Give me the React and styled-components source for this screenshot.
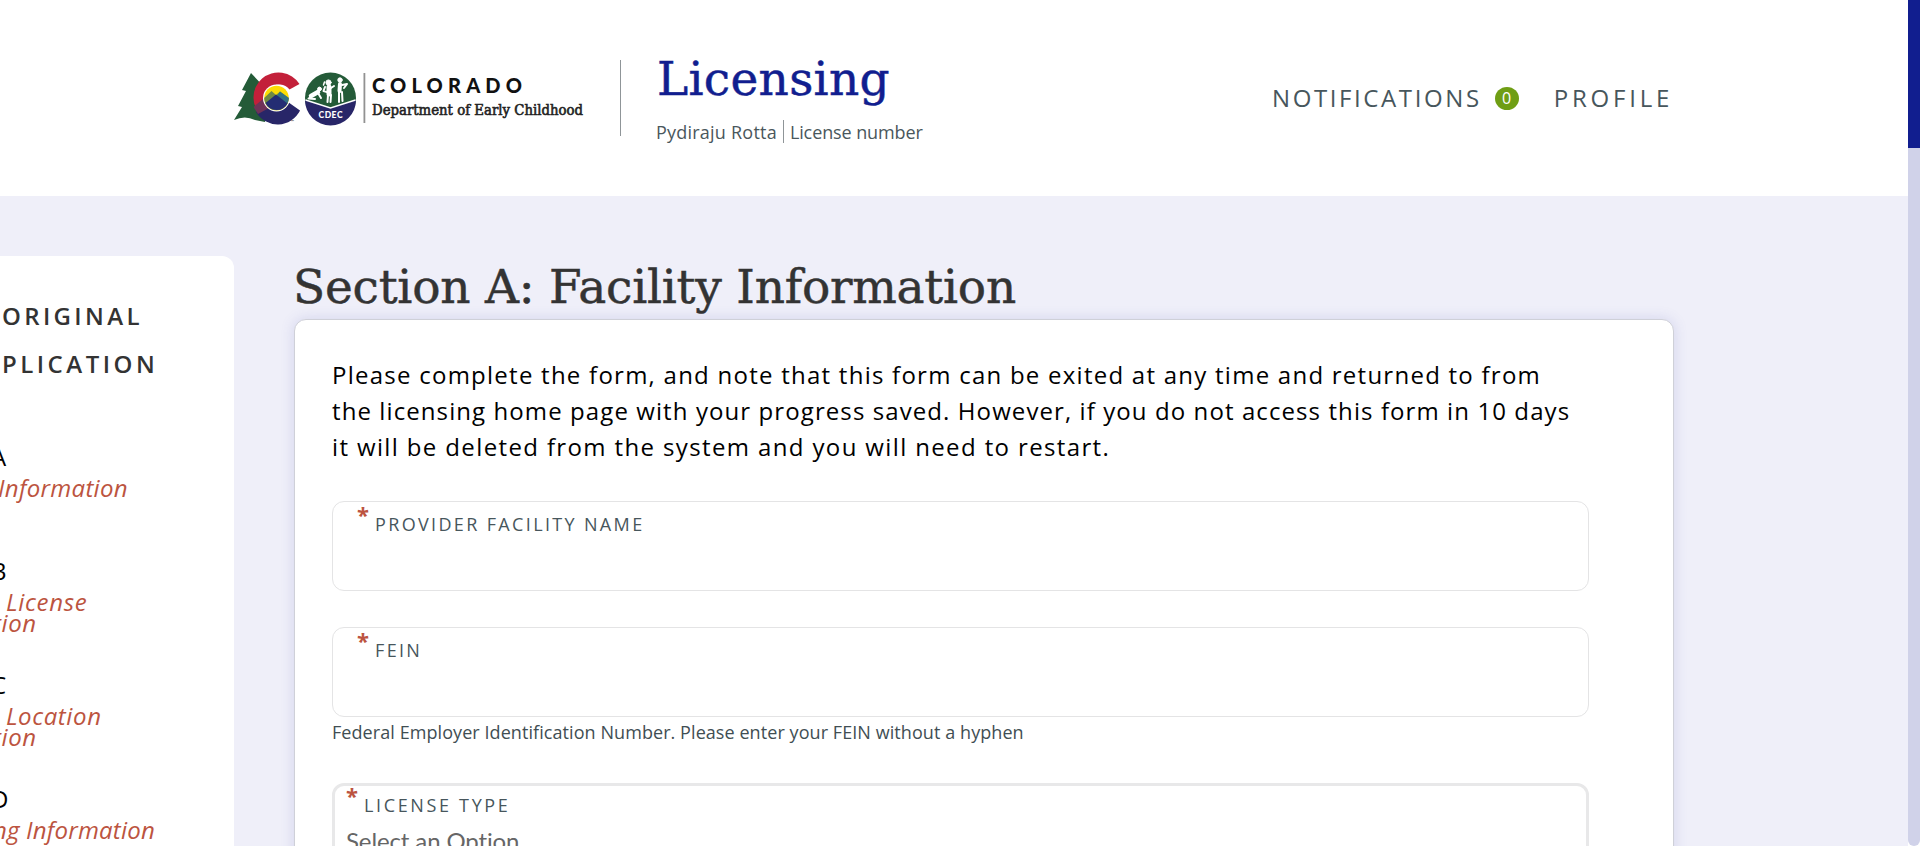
import React from 'react';
import styled, { createGlobalStyle } from 'styled-components';

const Global = createGlobalStyle`
  * { box-sizing: border-box; }
  body { margin: 0; background: #fff; font-family: "Open Sans", "Noto Sans", sans-serif; }
  h1, h2, p { margin: 0; font-weight: 400; }
`;

const Window = styled.div`display: flex; width: 100%; height: 846px; overflow: hidden;`;
const Page = styled.div`flex: 1; min-width: 0; background: #efeff9;`;
const ScrollTrack = styled.div`
  width: 12px; height: 846px; background: #d0d2e9; border-radius: 0 0 6px 6px;
`;
const ScrollThumb = styled.div`height: 148px; background: #111e8f;`;

const Header = styled.header`
  display: flex; align-items: flex-start; height: 196px; background: #fff; padding-left: 234px;
`;
const Logo = styled.svg`flex: none; margin-top: 66px; width: 350px; height: 64px;`;
const Divider = styled.div`width: 1px; height: 76px; margin: 60px 0 0 36px; background: #8f9598;`;
const Brand = styled.div`margin: 54px 0 0 36px; width: 420px; white-space: nowrap;`;
const BrandName = styled.h1`
  font: 47px/50px "DejaVu Serif", serif; color: #111e8f; letter-spacing: 0.3px;
  -webkit-text-stroke: 0.5px #111e8f;
`;
const BrandInfo = styled.div`
  display: flex; margin: 16px 0 0 -1px; font-size: 18px; line-height: 24px; color: #4a575c;
`;
const BrandItem = styled.span`
  letter-spacing: ${(p) => p.$track || 0}px;
  & + & { border-left: 1px solid #8f9598; margin-left: 6px; padding-left: 6px; height: 23px; }
`;
const Nav = styled.nav`display: flex; align-items: center; margin: 82px 0 0 195px; height: 31px;`;
const NavLink = styled.a`
  font-size: 24px; line-height: 30px; color: #47565c; letter-spacing: ${(p) => p.$track}px; white-space: nowrap;
`;
const Badge = styled.span`
  width: 24px; height: 23px; border-radius: 50%; margin: 1px 35px 0 13px; background: #6f9e14; color: #fff;
  font-size: 16px; line-height: 22px; text-align: center;
`;

const Content = styled.div`display: flex; align-items: flex-start; padding-top: 60px;`;
const Sidebar = styled.aside`
  width: 234px; height: 700px; padding-top: 36px; background: #fff; border-radius: 0 12px 0 0; overflow: hidden;
  white-space: nowrap;
`;
const SideHeading = styled.h2`
  padding-left: 2px; margin-bottom: 54px; font-size: 24px; font-weight: 600; line-height: 48px; color: #333;
`;
const SideHeadingLine = styled.div`letter-spacing: ${(p) => p.$track}px;`;
const Step = styled.div`height: 114px;`;
const StepLetter = styled.div`
  margin-left: ${(p) => p.$shift}px; margin-bottom: 5px; font-size: 24px; line-height: 30px; color: #000;
`;
const StepName = styled.div`
  margin-left: ${(p) => p.$shift}px; font-size: 24px; font-style: italic; line-height: 21px; color: #bc5440;
  letter-spacing: ${(p) => p.$track || 0}px;
`;

const Main = styled.main`width: 1380px; margin-left: 60px;`;
const Title = styled.h2`
  font: 47px/62px "DejaVu Serif", serif; color: #333; letter-spacing: -0.22px; margin: 0 0 1px -1px; white-space: nowrap;
  -webkit-text-stroke: 0.5px #333;
`;
const Card = styled.section`
  height: 700px; padding: 37px 36px 36px 37px; background: #fff; border: 1px solid #cfd0d8; border-radius: 12px;
  box-shadow: 0 0 14px rgba(70, 80, 170, 0.17);
`;
const Intro = styled.p`margin-bottom: 36px; font-size: 24px; line-height: 36px; color: #000; white-space: nowrap;`;
const IntroLine = styled.span`display: block; letter-spacing: ${(p) => p.$track}px;`;
const Field = styled.div`
  display: flex; align-items: flex-start; width: 1257px; height: 90px; margin-bottom: ${(p) => (p.$tight ? 4 : 36)}px;
  padding: 0 0 0 24px; border: 1px solid #e4e4e5; border-radius: 12px;
`;
const Star = styled.span`width: 18px; font-size: 22px; font-weight: 700; line-height: 24px; color: #bc5440;`;
const Label = styled.label`
  margin-top: 10px; font-size: 18px; line-height: 24px; letter-spacing: ${(p) => p.$track || 2.35}px; color: #47565c;
`;
const Help = styled.p`
  margin-bottom: 40px; font-size: 18px; line-height: 23px; height: 22px; letter-spacing: 0.07px; color: #414e53;
`;
const Select = styled.div`
  width: 1257px; height: 104px; padding-left: 11px; border: 3px solid #e8e8e9; border-radius: 12px;
`;
const SelectTop = styled.div`display: flex; align-items: flex-start; height: 40px; margin-top: -3px;`;
const SelectValue = styled.div`
  font: 24px/30px Lato, sans-serif; letter-spacing: -0.12px; color: #666; margin-top: 3px;
`;

const steps = [
  { letter: 'A', shift: -9, names: [['Information', -2, 0.3]] },
  { letter: 'B', shift: -9, names: [['License', 6, 0.7], ['tion', -7, 0.6]] },
  { letter: 'C', shift: -9, names: [['Location', 6, 0.6], ['tion', -7, 0.6]] },
  { letter: 'D', shift: -9, names: [['ng Information', -7, 0.2]] },
];

function CdecLogo() {
  return (
    <Logo viewBox="234 66 350 64">
      <path d="M251 73L242 90L246 91L238 106L242 107L234 120Q245 115 255 120L265 122V88Z" fill="#245b38" />
      <path d="M299.5 84A25 25 0 1 0 299.5 111L289.500 105.500A13 13 0 1 1 289.500 89.500Z" fill="#c3203a" />
      <path d="M256 112A25 25 0 0 0 300 110.500L288 102L283 106L270 106L264 104Z" fill="#282668" />
      <path d="M253.500 107L263 99L269 108L258 114Z" fill="#703258" />
      <circle cx="276.500" cy="98" r="13.500" fill="#fff" />
      <circle cx="276.500" cy="98" r="12.300" fill="#fddc05" />
      <path d="M264.200 98L271.500 91L276 95L280 91.500L288.800 98A12.300 12.300 0 0 1 264.200 98Z" fill="#708a43" />
      <path d="M280 91.500L288.800 98A12.300 12.300 0 0 1 286 105.500L276 98Z" fill="#337184" />
      <path d="M265.500 103L276 94.500L287.500 103.500A12.300 12.300 0 0 1 265.500 103Z" fill="#242d73" />
      <text x="291" y="123" fontSize="4" fontFamily="Lato" fill="#222">™</text>
      <circle cx="330.500" cy="98" r="25.500" fill="#245b38" />
      <path d="M305 100L330.500 108L356 100A25.500 25.500 0 0 1 305 100Z" fill="#282668" />
      <path d="M305.500 100L330.500 108L355.500 100" fill="none" stroke="#fff" strokeWidth="1.500" />
      <g fill="none" stroke="#fff" strokeLinecap="round" strokeLinejoin="round">
        <circle cx="319.500" cy="89" r="1.900" fill="#fff" />
        <path d="M318 92L311 96" strokeWidth="4.500" />
        <path d="M318 93L321 98M311 97L308.500 98.500L315 99" strokeWidth="2" />
        <circle cx="328.500" cy="82.500" r="2.600" fill="#fff" />
        <path d="M324.500 82L323.500 85" strokeWidth="1.500" />
        <path d="M329 87V94" strokeWidth="5" />
        <path d="M325 87L323.500 91L327 92M331 88L334 86M328 95L327.500 102M331 95L330.500 102" strokeWidth="2" />
        <circle cx="340" cy="80" r="2.200" fill="#fff" />
        <path d="M340 84L339.500 91" strokeWidth="4" />
        <path d="M342 85L347 84L344 88M339 92L339 102M342 92L342.500 101" strokeWidth="2" />
      </g>
      <text x="318.500" y="118" fontSize="8.500" fontWeight="900" fontFamily="Lato" fill="#fff" textLength="24">CDEC</text>
      <rect x="363.500" y="73" width="1.800" height="50" fill="#929292" />
      <text x="372" y="93.200" fontSize="20" fontWeight="900" fontFamily="Lato" fill="#111" textLength="150">COLORADO</text>
      <text x="372" y="115" fontSize="14" fontFamily="DejaVu Serif" fill="#222" stroke="#222" strokeWidth="0.600" textLength="211" lengthAdjust="spacingAndGlyphs">Department of Early Childhood</text>
    </Logo>
  );
}

export default function App() {
  return (
    <Window>
      <Global />
      <Page>
        <Header>
          <CdecLogo />
          <Divider />
          <Brand>
            <BrandName>Licensing</BrandName>
            <BrandInfo>
              <BrandItem $track={0.22}>Pydiraju Rotta</BrandItem>
              <BrandItem $track={-0.1}>License number</BrandItem>
            </BrandInfo>
          </Brand>
          <Nav>
            <NavLink $track={2.6}>NOTIFICATIONS</NavLink>
            <Badge>0</Badge>
            <NavLink $track={3.8}>PROFILE</NavLink>
          </Nav>
        </Header>
        <Content>
          <Sidebar>
            <SideHeading>
              <SideHeadingLine $track={3.35}>ORIGINAL</SideHeadingLine>
              <SideHeadingLine $track={3.5}>PLICATION</SideHeadingLine>
            </SideHeading>
            {steps.map((s) => (
              <Step key={s.letter}>
                <StepLetter $shift={s.shift}>{s.letter}</StepLetter>
                {s.names.map(([name, shift, track]) => (
                  <StepName key={name} $shift={shift} $track={track}>{name}</StepName>
                ))}
              </Step>
            ))}
          </Sidebar>
          <Main>
            <Title>Section A: Facility Information</Title>
            <Card>
              <Intro>
                <IntroLine $track={1.25}>Please complete the form, and note that this form can be exited at any time and returned to from</IntroLine>
                <IntroLine $track={1.09}>the licensing home page with your progress saved. However, if you do not access this form in 10 days</IntroLine>
                <IntroLine $track={1.37}>it will be deleted from the system and you will need to restart.</IntroLine>
              </Intro>
              <Field>
                <Star>*</Star>
                <Label>PROVIDER FACILITY NAME</Label>
              </Field>
              <Field $tight>
                <Star>*</Star>
                <Label>FEIN</Label>
              </Field>
              <Help>Federal Employer Identification Number. Please enter your FEIN without a hyphen</Help>
              <Select>
                <SelectTop>
                  <Star>*</Star>
                  <Label $track={2.65}>LICENSE TYPE</Label>
                </SelectTop>
                <SelectValue>Select an Option</SelectValue>
              </Select>
            </Card>
          </Main>
        </Content>
      </Page>
      <ScrollTrack><ScrollThumb /></ScrollTrack>
    </Window>
  );
}
